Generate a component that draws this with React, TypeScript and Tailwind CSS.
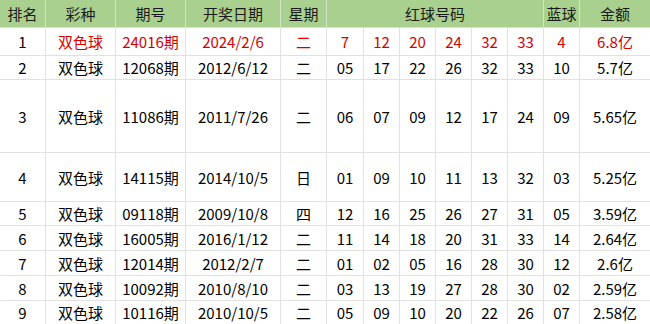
const rows = [
  ['1', '双色球', '24016期', '2024/2/6', '二', ['7', '12', '20', '24', '32', '33'], '4', '6.8亿'],
  ['2', '双色球', '12068期', '2012/6/12', '二', ['05', '17', '22', '26', '32', '33'], '10', '5.7亿'],
  ['3', '双色球', '11086期', '2011/7/26', '二', ['06', '07', '09', '12', '17', '24'], '09', '5.65亿'],
  ['4', '双色球', '14115期', '2014/10/5', '日', ['01', '09', '10', '11', '13', '32'], '03', '5.25亿'],
  ['5', '双色球', '09118期', '2009/10/8', '四', ['12', '16', '25', '26', '27', '31'], '05', '3.59亿'],
  ['6', '双色球', '16005期', '2016/1/12', '二', ['11', '14', '18', '20', '31', '33'], '14', '2.64亿'],
  ['7', '双色球', '12014期', '2012/2/7', '二', ['01', '02', '05', '16', '28', '30'], '12', '2.6亿'],
  ['8', '双色球', '10092期', '2010/8/10', '二', ['03', '13', '19', '27', '28', '30'], '02', '2.59亿'],
  ['9', '双色球', '10116期', '2010/10/5', '二', ['05', '09', '10', '20', '22', '26'], '07', '2.58亿'],
] as const;

const headCell = 'flex items-center justify-center border-r border-b border-[#d3e5c6] bg-[#a9d08e] text-[#1a1a1a]';
const cell = 'flex items-center justify-center border-r border-b border-[#e1e1e1]';

export default function App() {
  return (
    <div
      className="grid w-[650px] h-[324px] overflow-hidden bg-white text-[15px] leading-none text-black grid-cols-[46px_70px_70px_95px_46px_37px_36px_36px_36px_36px_36px_36px_70px] grid-rows-[28px_28px_24px_73px_49px_24px_25px_25px_25px_24px]"
      style={{ fontFamily: '"Noto Sans CJK SC", "Noto Sans", sans-serif' }}
    >
      {/* Header */}
      <div className={headCell}>排名</div>
      <div className={headCell}>彩种</div>
      <div className={headCell}>期号</div>
      <div className={headCell}>开奖日期</div>
      <div className={headCell}>星期</div>
      <div className={`${headCell} col-span-6`}>红球号码</div>
      <div className={headCell}>蓝球</div>
      <div className={`${headCell} border-r-0`}>金额</div>

      {rows.map((r, i) => {
        const color = i === 0 ? 'text-[#d40000]' : '';
        return [
          <div key={`${i}-a`} className={cell}>{r[0]}</div>,
          <div key={`${i}-b`} className={`${cell} ${color}`}>{r[1]}</div>,
          <div key={`${i}-c`} className={`${cell} ${color}`}>{r[2]}</div>,
          <div key={`${i}-d`} className={`${cell} ${color}`}>{r[3]}</div>,
          <div key={`${i}-e`} className={`${cell} ${color}`}>{r[4]}</div>,
          ...r[5].map((n, j) => (
            <div key={`${i}-r${j}`} className={`${cell} ${color}`}>{n}</div>
          )),
          <div key={`${i}-f`} className={`${cell} ${color}`}>{r[6]}</div>,
          <div key={`${i}-g`} className={`${cell} border-r-0 ${color}`}>{r[7]}</div>,
        ];
      })}
    </div>
  );
}
